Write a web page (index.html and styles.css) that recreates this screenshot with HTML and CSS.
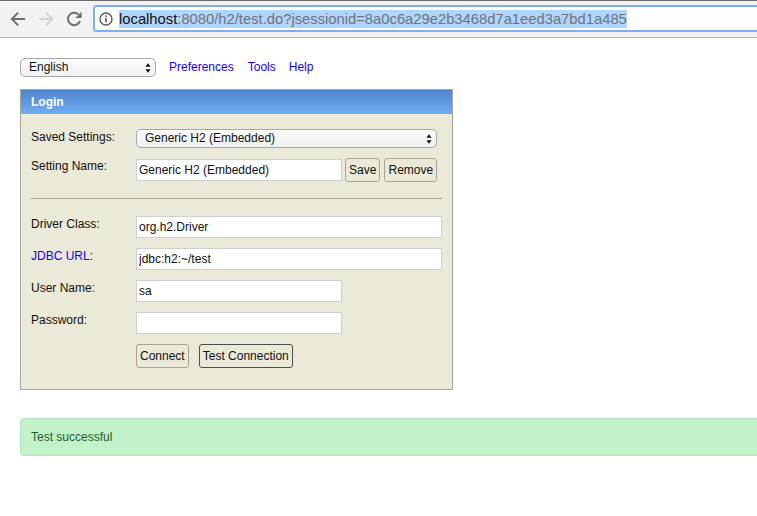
FILE: index.html
```
<!DOCTYPE html>
<html lang="en">
<head>
<meta charset="utf-8">
<title>H2 Console</title>
<link rel="stylesheet" href="styles.css">
</head>
<body>
<header class="toolbar">
  <div class="nav">
    <svg class="nav-icon" viewBox="0 0 16 16"><path d="M15 8H2M8.2 1.6L1.8 8L8.2 14.4" fill="none" stroke="#6e6e6e" stroke-width="1.9"/></svg>
    <svg class="nav-icon" viewBox="0 0 16 16"><path d="M1 8H14M7.8 1.6L14.2 8L7.8 14.4" fill="none" stroke="#d4d4d4" stroke-width="1.9"/></svg>
    <svg class="nav-icon" viewBox="0 0 16 16"><path d="M14 10.2A6.2 6.2 0 1 1 12.6 3.6" fill="none" stroke="#6e6e6e" stroke-width="2"/><path d="M9.4 7H15.6V.8Z" fill="#6e6e6e"/></svg>
  </div>
  <div class="omnibox">
    <svg class="info" viewBox="0 0 14 14"><circle cx="7" cy="7" r="6" fill="none" stroke="#5a5a5a" stroke-width="1.4"/><rect x="6.2" y="6" width="1.6" height="4.4" fill="#5a5a5a"/><rect x="6.2" y="3.4" width="1.6" height="1.6" fill="#5a5a5a"/></svg>
    <span class="url"><span class="host">localhost</span>:8080/h2/test.do?jsessionid=8a0c6a29e2b3468d7a1eed3a7bd1a485</span>
  </div>
</header>
<main class="page">
  <nav class="topnav">
    <span class="select-wrap lang"><span class="select-text">English</span><svg class="updown" viewBox="0 0 7 11"><path d="M3.5 0L6.5 4H.5ZM3.5 11L.5 7H6.5Z"/></svg></span>
    <a class="link pref" href="#">Preferences</a>
    <a class="link" href="#">Tools</a>
    <a class="link help" href="#">Help</a>
  </nav>
  <section class="login">
    <h1 class="login-head">Login</h1>
    <form class="login-body">
      <div class="row saved">
        <span class="label">Saved Settings:</span>
        <span class="select-wrap wide"><span class="select-text">Generic H2 (Embedded)</span><svg class="updown" viewBox="0 0 7 11"><path d="M3.5 0L6.5 4H.5ZM3.5 11L.5 7H6.5Z"/></svg></span>
      </div>
      <div class="row name">
        <span class="label">Setting Name:</span>
        <input class="field short" type="text" value="Generic H2 (Embedded)">
        <button class="btn" type="button">Save</button>
        <button class="btn remove" type="button">Remove</button>
      </div>
      <hr class="rule">
      <div class="row">
        <span class="label">Driver Class:</span>
        <input class="field long" type="text" value="org.h2.Driver">
      </div>
      <div class="row">
        <span class="label"><a href="#">JDBC URL</a>:</span>
        <input class="field long" type="text" value="jdbc:h2:~/test">
      </div>
      <div class="row">
        <span class="label">User Name:</span>
        <input class="field short" type="text" value="sa">
      </div>
      <div class="row">
        <span class="label">Password:</span>
        <input class="field short" type="password">
      </div>
      <div class="row actions">
        <span class="label"></span>
        <button class="btn" type="button">Connect</button>
        <button class="btn focus" type="button">Test Connection</button>
      </div>
    </form>
  </section>
  <div class="alert">Test successful</div>
</main>
</body>
</html>
```
FILE: styles.css
```
* { box-sizing: border-box; }
html, body { margin: 0; height: 100%; }
body {
  background: #fff;
  font-family: "Liberation Sans", Arial, sans-serif;
  font-size: 12px;
  color: #111;
  overflow: hidden;
}
.toolbar {
  height: 38px;
  background: #f2f2f2;
  border-top: 1px solid #6a6a6a;
  border-bottom: 1px solid #b5b5b5;
  display: flex;
  align-items: center;
  padding: 0 0 1px 10px;
}
.nav { display: flex; gap: 12px; width: 83px; flex: none; }
.nav-icon { width: 16px; height: 16px; flex: none; }
.omnibox {
  flex: 1;
  height: 27px;
  background: #fff;
  border: 2px solid #7fb0ec;
  border-right: 0;
  border-radius: 3px 0 0 3px;
  display: flex;
  align-items: center;
  padding-left: 4px;
}
.info { width: 14px; height: 14px; flex: none; margin-right: 6px; }
.url {
  font-size: 14.77px;
  line-height: 18px;
  color: #6f7378;
  background: #b0d5ff;
  white-space: nowrap;
}
.host { color: #111; }
.page { padding: 20px 0 0 20px; }
.topnav { display: flex; align-items: center; height: 19px; gap: 14px; }
.link { font-size: 12px; position: relative; top: -1px; }
.help { margin-left: -1px; }
a { color: #1a00f0; text-decoration: none; }
.lang { width: 136px; margin-right: -1px; }
.select-wrap {
  height: 19px;
  display: inline-flex;
  align-items: center;
  justify-content: space-between;
  border: 1px solid #a8a8a8;
  border-radius: 5px;
  background: linear-gradient(#fbfbfb, #f0f0f0);
  padding: 0 4px 2px 8px;
  font-size: 12px;
  color: #111;
}
.updown { width: 6px; height: 10px; fill: #111; position: relative; top: 1px; }
.login {
  width: 433px;
  margin-top: 12px;
  border: 1px solid #a8a596;
  background: #ebe9d8;
}
.login-head {
  margin: 0;
  height: 24px;
  padding: 0 10px;
  line-height: 24px;
  font-size: 12px;
  font-weight: bold;
  color: #fff;
  background: linear-gradient(#5384cf, #6dacf4);
}
.login-body {
  display: flex;
  flex-direction: column;
  gap: 10px;
  padding: 15px 10px 21px;
}
.row { display: flex; align-items: flex-start; gap: 3px; }
.label { width: 105px; margin-right: -3px; flex: none; line-height: 14px; padding-top: 1px; }
.saved { height: 19px; }
.wide { width: 301px; }
.name { height: 24px; }
.name .field { margin-top: 1px; }
.field {
  height: 22px;
  border: 1px solid #cfcfcf;
  background: #fff;
  padding: 0 2px;
  font: 12px "Liberation Sans", Arial, sans-serif;
  color: #111;
  outline: 0;
}
.short { width: 206px; }
.long { width: 306px; }
.btn {
  height: 24px;
  border: 1px solid #a8a596;
  border-radius: 3px;
  background: #ebe9d8;
  padding: 0 3px;
  font: 12px "Liberation Sans", Arial, sans-serif;
  color: #111;
}
.remove { width: 53px; padding: 0; margin-left: 1px; }
.rule {
  width: 100%;
  height: 1px;
  margin: 6px 0 7px;
  border: 0;
  background: #a8a596;
}
.actions { gap: 10px; }
.actions .label { margin-right: -10px; }
.focus { border-color: #4d4d48; }
.alert {
  margin-top: 28px;
  height: 38px;
  line-height: 36px;
  padding-left: 10px;
  background: #c3f2ca;
  border: 1px solid #b2e5bd;
  border-right: 0;
  border-radius: 4px 0 0 4px;
  color: #1f5e2b;
}
```
